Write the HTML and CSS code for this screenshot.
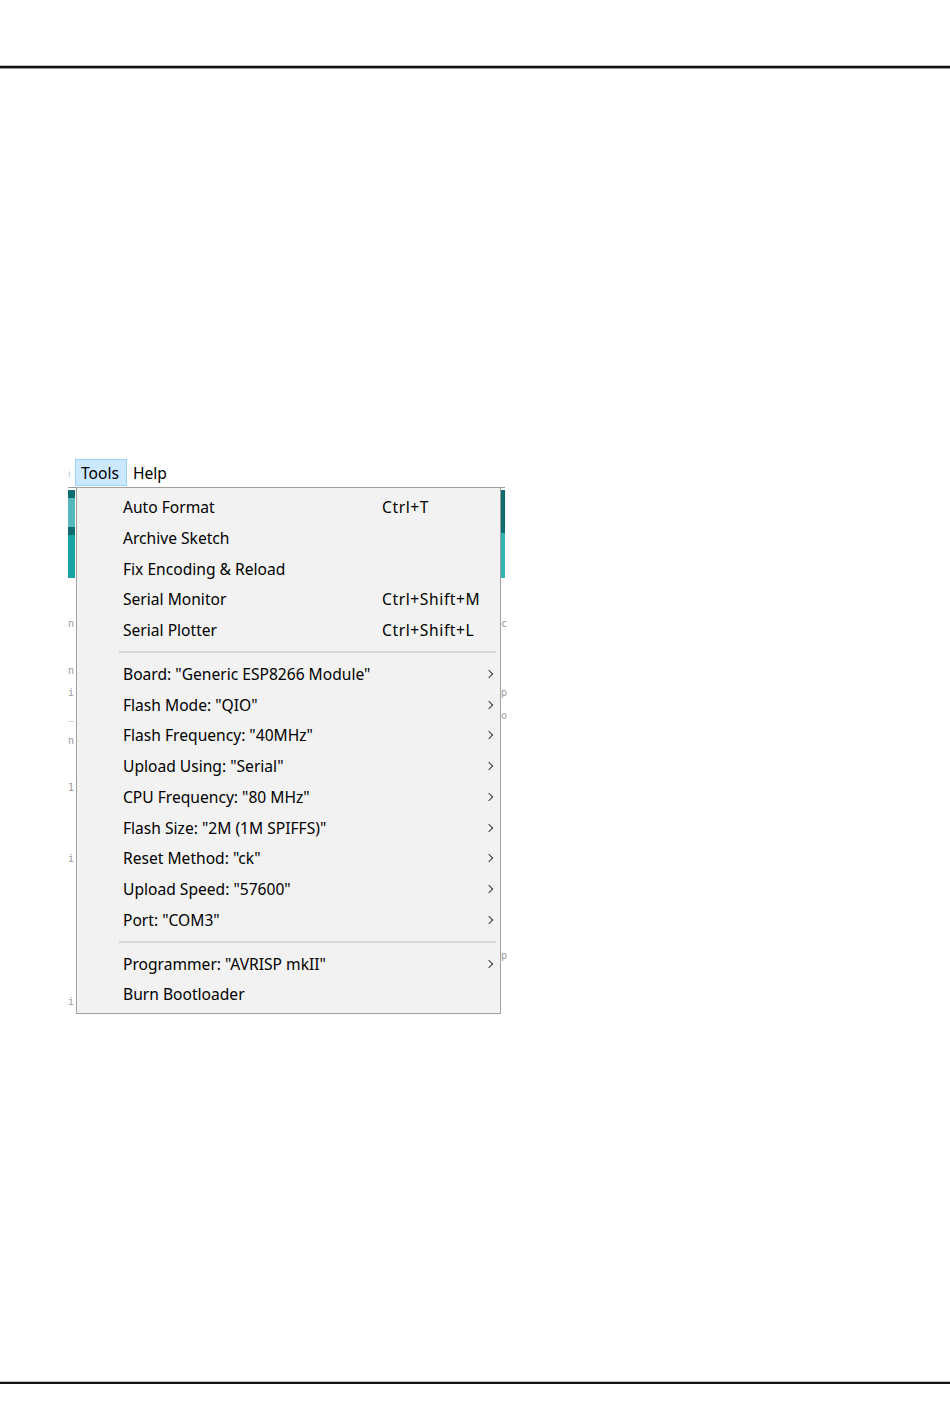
FILE: index.html
```html
<!DOCTYPE html>
<html lang="en">
<head>
    <meta charset="UTF-8">
    <title>Arduino IDE - Tools menu</title>
    <link rel="stylesheet" href="styles.css">
</head>
<body>
    <div class="rule rule-top"></div>

    <div class="shot">
        <div class="menubar">
            <span class="stray">i</span>
            <span class="menubar-item active">Tools</span>
            <span class="menubar-item">Help</span>
        </div>

        <div class="editor">
            <div class="gutter gutter-left">
                <div class="toolbar-strip left"></div>
                <span class="ch" style="top: 131px">n</span>
                <span class="ch" style="top: 178px">n</span>
                <span class="ch" style="top: 200px">i</span>
                <span class="ch" style="top: 223px">_</span>
                <span class="ch" style="top: 248px">n</span>
                <span class="ch" style="top: 295px">1</span>
                <span class="ch" style="top: 366px">i</span>
                <span class="ch" style="top: 509px">i</span>
            </div>
            <div class="gutter gutter-right">
                <div class="toolbar-strip right"></div>
                <span class="ch" style="top: 131px">c</span>
                <span class="ch" style="top: 200px">p</span>
                <span class="ch" style="top: 223px">o</span>
                <span class="ch" style="top: 463px">p</span>
            </div>

            <div class="dropdown">
                <div class="item"><span class="label">Auto Format</span><span class="shortcut">Ctrl+T</span></div>
                <div class="item"><span class="label">Archive Sketch</span></div>
                <div class="item"><span class="label">Fix Encoding &amp; Reload</span></div>
                <div class="item"><span class="label">Serial Monitor</span><span class="shortcut">Ctrl+Shift+M</span></div>
                <div class="item"><span class="label">Serial Plotter</span><span class="shortcut">Ctrl+Shift+L</span></div>
                <div class="sep"></div>
                <div class="item sub"><span class="label">Board: "Generic ESP8266 Module"</span></div>
                <div class="item sub"><span class="label">Flash Mode: "QIO"</span></div>
                <div class="item sub"><span class="label">Flash Frequency: "40MHz"</span></div>
                <div class="item sub"><span class="label">Upload Using: "Serial"</span></div>
                <div class="item sub"><span class="label">CPU Frequency: "80 MHz"</span></div>
                <div class="item sub"><span class="label">Flash Size: "2M (1M SPIFFS)"</span></div>
                <div class="item sub"><span class="label">Reset Method: "ck"</span></div>
                <div class="item sub"><span class="label">Upload Speed: "57600"</span></div>
                <div class="item sub"><span class="label">Port: "COM3"</span></div>
                <div class="sep"></div>
                <div class="item sub"><span class="label">Programmer: "AVRISP mkII"</span></div>
                <div class="item"><span class="label">Burn Bootloader</span></div>
            </div>
        </div>
    </div>

    <div class="rule rule-bottom"></div>
</body>
</html>
```

FILE: styles.css
```css
body {
    margin: 0;
    background: #fff;
    font-family: "Noto Sans", "Open Sans", sans-serif;
    color: #000;
}
.rule {
    height: 2px;
    background: #111;
    box-shadow: 0 1px 0 #9a9a9a, 0 -1px 0 #bdbdbd;
}
.rule-top {
    margin-top: 66px;
}
.rule-bottom {
    margin-top: 368px;
}
.shot {
    margin: 391px 0 0 68px;
    width: 437px;
}
.menubar {
    height: 28px;
    display: flex;
    align-items: flex-start;
    font-size: 15.6px;
    position: relative;
}
.stray {
    position: absolute;
    left: 0;
    top: 8px;
    font-size: 9px;
    color: #9cc7e6;
}
.menubar-item {
    height: 27px;
    line-height: 29px;
    padding: 0 6px;
    box-sizing: border-box;
}
.menubar-item.active {
    margin-left: 7px;
    width: 52px;
    background: #cce8ff;
    border: 1px solid #99d1ff;
    line-height: 27px;
    padding: 0 5px;
}
.editor {
    position: relative;
    height: 526px;
    border-top: 1px solid #a0a0a0;
    display: flex;
    justify-content: space-between;
}
.gutter {
    position: relative;
    width: 7px;
}
.gutter-right {
    width: 4px;
}
.toolbar-strip {
    margin-top: 2px;
    height: 88px;
}
.toolbar-strip.left {
    background: linear-gradient(#0e6b6e 0 8px, #56b9bb 8px 37px, #0e6b6e 37px 45px, #1aa3a3 45px);
}
.toolbar-strip.right {
    background: linear-gradient(#0e6b6e 0 43px, #2fb3b3 43px);
}
.ch {
    position: absolute;
    left: 0;
    font-family: "DejaVu Sans Mono", monospace;
    font-size: 10px;
    line-height: 10px;
    color: #9a9a9a;
}
.dropdown {
    position: absolute;
    left: 8px;
    top: -1px;
    width: 425px;
    height: 527px;
    box-sizing: border-box;
    background: #f2f2f2;
    border: 1px solid #a0a0a0;
    padding: 4px 0 2px;
    font-size: 15.6px;
}
.item {
    position: relative;
    height: 30.75px;
    line-height: 30px;
    padding-left: 46px;
}
.shortcut {
    position: absolute;
    left: 305px;
    top: 0;
    letter-spacing: 0.6px;
}
.item.sub::after {
    content: "";
    position: absolute;
    left: 409px;
    top: 12px;
    width: 5px;
    height: 5px;
    border-top: 1.5px solid #3a3a3a;
    border-right: 1.5px solid #3a3a3a;
    transform: rotate(45deg);
}
.sep {
    height: 2px;
    background: #d7d7d7;
    margin: 5px 4px 6px 42px;
}
```
